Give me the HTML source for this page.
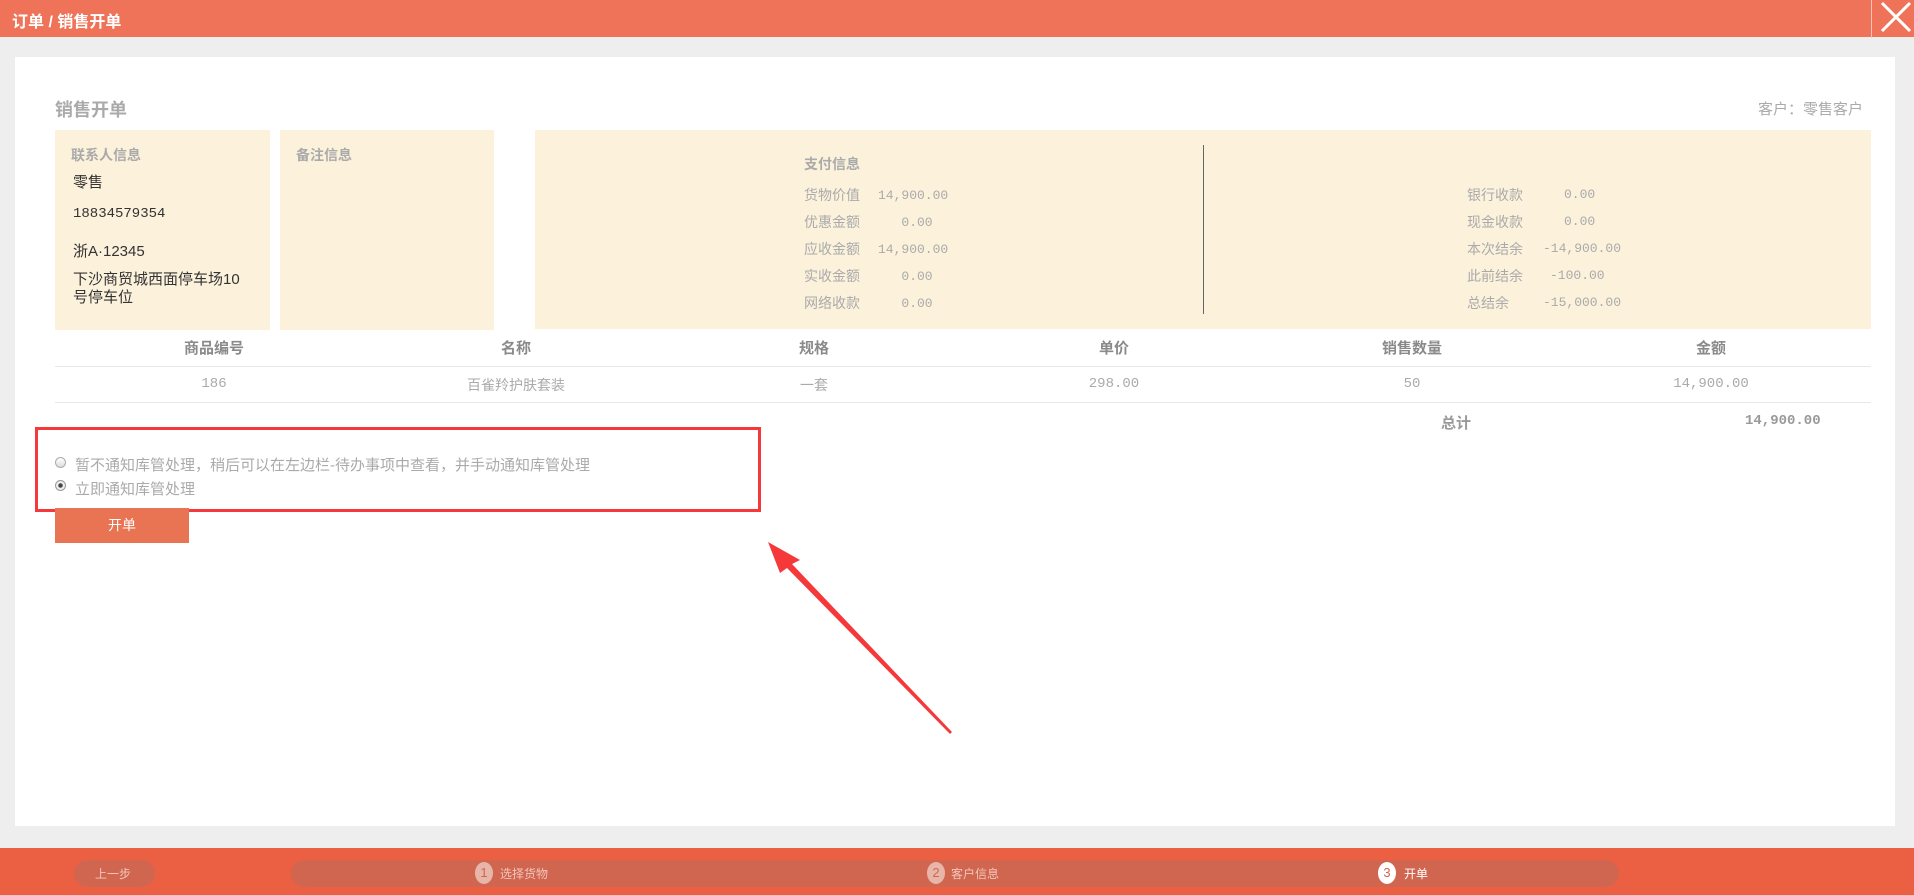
<!DOCTYPE html>
<html><head><meta charset="utf-8">
<style>
*{margin:0;padding:0;box-sizing:border-box}
body{width:1914px;height:895px;background:#eeeeee;font-family:"Liberation Sans","Noto Sans CJK SC","WenQuanYi Zen Hei",sans-serif;position:relative;overflow:hidden;color:#999}
.a{position:absolute;white-space:nowrap}
#hdr{left:0;top:0;width:1914px;height:37px;background:#ef7359}
#panel{left:15px;top:57px;width:1880px;height:769px;background:#fff}
.box{background:#fcf2dc;position:absolute}
.mono{font-family:"Liberation Mono","Noto Sans CJK SC",monospace}
.th{font-size:15px;font-weight:bold;color:#8a8a8a;text-align:center;width:302px}
.td{font-size:14px;color:#aaa;text-align:center;width:302px}
.pay{font-size:14px;color:#aaa}
.pv{position:absolute;font-family:"Liberation Mono",monospace;font-size:13px;color:#aaa;white-space:nowrap}
#bar{left:0;top:848px;width:1914px;height:47px;background:#eb5f43}
.pill{background:#d16650;border-radius:14px;position:absolute}
.circ{position:absolute;width:18px;height:22px;border-radius:50%;font-size:13px;text-align:center;line-height:22px}
</style></head><body>
<div class="a" id="hdr"></div>
<div class="a" style="left:12px;top:8px;color:#fff;font-size:16px;font-weight:bold">订单 / 销售开单</div>
<div class="a" style="left:1871px;top:0;width:1px;height:38px;background:#f7c4b7"></div>
<svg class="a" style="left:1872px;top:0" width="42" height="37"><path d="M10 3 L38 31 M38 3 L10 31" stroke="#fff" stroke-width="3"/></svg>
<div class="a" id="panel"></div>

<div class="a" style="left:55px;top:96px;font-size:18px;font-weight:bold;color:#aaa">销售开单</div>
<div class="a" style="left:1758px;top:98px;font-size:15px;color:#aaa">客户：零售客户</div>

<div class="box" style="left:55px;top:130px;width:215px;height:200px"></div>
<div class="box" style="left:280px;top:130px;width:214px;height:200px"></div>
<div class="box" style="left:535px;top:130px;width:1336px;height:199px"></div>

<div class="a" style="left:71px;top:145px;font-size:14px;font-weight:bold;color:#aaa">联系人信息</div>
<div class="a" style="left:73px;top:171px;font-size:15px;color:#333">零售</div>
<div class="a mono" style="left:73px;top:206px;font-size:14px;color:#333">18834579354</div>
<div class="a" style="left:73px;top:240px;font-size:15px;color:#333">浙A·12345</div>
<div class="a" style="left:73px;top:271px;font-size:15px;color:#333;line-height:18px;white-space:normal;width:178px">下沙商贸城西面停车场10号停车位</div>
<div class="a" style="left:296px;top:145px;font-size:14px;font-weight:bold;color:#aaa">备注信息</div>

<div class="a" style="left:804px;top:154px;font-size:14px;font-weight:bold;color:#aaa">支付信息</div>
<div class="a pay" style="left:804px;top:182px;line-height:27px;white-space:pre">货物价值
优惠金额
应收金额
实收金额
网络收款</div>
<div class="a pay mono" style="left:878px;top:182px;line-height:27px;white-space:pre;font-size:13px">14,900.00
   0.00
14,900.00
   0.00
   0.00</div>
<div class="a" style="left:1203px;top:145px;width:1px;height:169px;background:#666"></div>
<div class="a pay" style="left:1467px;top:182px;line-height:27px;white-space:pre">银行收款
现金收款
本次结余
此前结余
总结余</div>
<div class="pv" style="left:1564px;top:187px">0.00</div>
<div class="pv" style="left:1564px;top:214px">0.00</div>
<div class="pv" style="left:1543px;top:241px">-14,900.00</div>
<div class="pv" style="left:1550px;top:268px">-100.00</div>
<div class="pv" style="left:1543px;top:295px">-15,000.00</div>

<div class="a th" style="left:63px;top:337px">商品编号</div>
<div class="a th" style="left:365px;top:337px">名称</div>
<div class="a th" style="left:663px;top:337px">规格</div>
<div class="a th" style="left:963px;top:337px">单价</div>
<div class="a th" style="left:1261px;top:337px">销售数量</div>
<div class="a th" style="left:1560px;top:337px">金额</div>
<div class="a" style="left:55px;top:366px;width:1816px;height:1px;background:#e8e8e8"></div>
<div class="a td mono" style="left:63px;top:376px">186</div>
<div class="a td" style="left:365px;top:375px">百雀羚护肤套装</div>
<div class="a td" style="left:663px;top:375px">一套</div>
<div class="a td mono" style="left:963px;top:376px">298.00</div>
<div class="a td mono" style="left:1261px;top:376px">50</div>
<div class="a td mono" style="left:1560px;top:376px">14,900.00</div>
<div class="a" style="left:55px;top:402px;width:1816px;height:1px;background:#e8e8e8"></div>
<div class="a" style="left:1441px;top:412px;font-size:15px;font-weight:bold;color:#999">总计</div>
<div class="a mono" style="left:1745px;top:413px;font-size:14px;font-weight:bold;color:#999">14,900.00</div>

<div class="a" style="left:35px;top:427px;width:726px;height:85px;border:3px solid #f5393b"></div>
<div class="a" style="left:55px;top:457px;width:11px;height:11px;border-radius:50%;border:1px solid #aaa;background:linear-gradient(#fff,#ddd)"></div>
<div class="a" style="left:75px;top:454px;font-size:15px;color:#aaa">暂不通知库管处理，稍后可以在左边栏-待办事项中查看，并手动通知库管处理</div>
<div class="a" style="left:55px;top:480px;width:11px;height:11px;border-radius:50%;border:1px solid #999;background:radial-gradient(#444 30%,#eee 40%)"></div>
<div class="a" style="left:75px;top:478px;font-size:15px;color:#aaa">立即通知库管处理</div>
<div class="a" style="left:55px;top:508px;width:134px;height:35px;background:#e87454;color:#fff;font-size:14px;text-align:center;line-height:35px">开单</div>

<svg class="a" style="left:0;top:0" width="1914" height="895"><polygon points="768,542 800,560 792,564 952,732 950,734 787,568 780,573" fill="#f5393b"/></svg>

<div class="a" id="bar"></div>
<div class="pill" style="left:74px;top:860px;width:81px;height:27px"></div>
<div class="a" style="left:95px;top:865px;font-size:12px;color:#f1c6bb">上一步</div>
<div class="pill" style="left:291px;top:860px;width:1328px;height:27px"></div>
<div class="circ" style="left:475px;top:862px;background:#e8b6a9;color:#d16650">1</div>
<div class="a" style="left:500px;top:865px;font-size:12px;color:#f1c6bb">选择货物</div>
<div class="circ" style="left:927px;top:862px;background:#e8b6a9;color:#d16650">2</div>
<div class="a" style="left:951px;top:865px;font-size:12px;color:#f1c6bb">客户信息</div>
<div class="circ" style="left:1378px;top:862px;background:#fff;color:#d16650">3</div>
<div class="a" style="left:1404px;top:865px;font-size:12px;color:#fff">开单</div>
</body></html>
